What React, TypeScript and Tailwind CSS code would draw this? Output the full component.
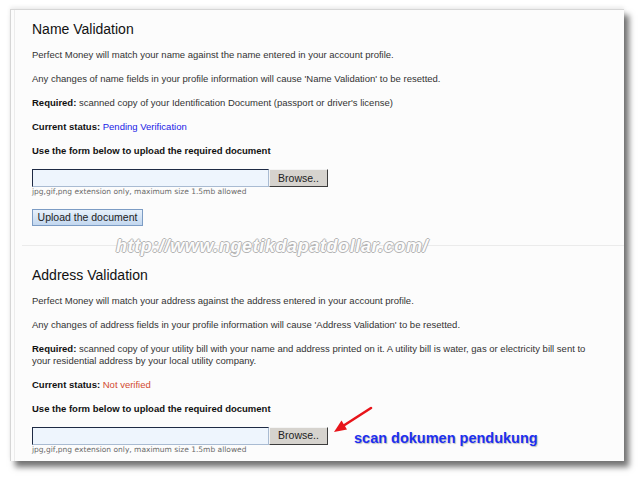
import React from 'react';

const body = "font-['Liberation_Sans',Arial,sans-serif]";

function FileRow() {
  return (
    <>
      <div className="flex">
        <div className="h-[18px] w-[237px] border border-t-[#1e2a44] border-l-[#1e2a44] border-r-[#a9bbd2] border-b-[#a9bbd2] bg-[#eef5fd]" />
        <button className="flex h-[18px] w-[59px] items-center justify-center border border-t-[#f4f4f4] border-l-[#f4f4f4] border-r-[#3c3c3c] border-b-[#3c3c3c] bg-[#d6d3ce] text-[10.5px] leading-none text-[#222]">
          Browse..
        </button>
      </div>
      <p className="font-['DejaVu_Sans',Verdana,sans-serif] text-[7.5px] leading-[9px] text-[#6a6a6a]">
        jpg,gif,png extension only, maximum size 1.5mb allowed
      </p>
    </>
  );
}

function Section({
  title,
  lines,
  required,
  status,
  statusClass,
}: {
  title: string;
  lines: string[];
  required: React.ReactNode;
  status: string;
  statusClass: string;
}) {
  return (
    <div>
      <h2 className="text-[14px] leading-[16px] text-[#111]">{title}</h2>
      {lines.map((l) => (
        <p key={l} className="mt-[12px] leading-[12px]">
          {l}
        </p>
      ))}
      <p className="mt-[12px] leading-[11.5px]">
        <b className="text-[#111]">Required:</b> {required}
      </p>
      <p className="mt-[12.5px] leading-[12px]">
        <b className="text-[#111]">Current status:</b> <span className={statusClass}>{status}</span>
      </p>
      <p className="mt-[12px] leading-[12px] font-bold text-[#111]">Use the form below to upload the required document</p>
      <div className="mt-[12px]">
        <FileRow />
      </div>
    </div>
  );
}

export default function App() {
  return (
    <div className={`relative h-[478px] w-[640px] overflow-hidden bg-white pl-[10px] pt-[9px] ${body}`}>
      <div className="h-[452px] w-[614px] overflow-hidden border-l border-t border-[#d6d6d6] bg-[#fcfcfc] shadow-[5px_6px_6px_rgba(0,0,0,0.55),0_-2px_4px_rgba(0,0,0,0.08)]">
        <div className="h-full ml-[3px] border-l border-[#ececec] pl-[17px] pt-[11px] text-[9.5px] text-[#333]">
          <Section
            title="Name Validation"
            lines={[
              'Perfect Money will match your name against the name entered in your account profile.',
              "Any changes of name fields in your profile information will cause 'Name Validation' to be resetted.",
            ]}
            required="scanned copy of your Identification Document (passport or driver's license)"
            status="Pending Verification"
            statusClass="text-[#1a1ae6]"
          />
          <button className="mt-[13px] h-[17px] w-[111px] border border-[#7c9cc4] bg-gradient-to-b from-[#e8f1fb] to-[#c2d7ef] text-[10.5px] leading-none text-[#222]">
            Upload the document
          </button>

          <div className="relative mt-[10px] h-[20px]">
            <div className="absolute left-[-10px] right-0 top-[9px] border-t border-[#ebebeb]" />
            <span className="absolute left-[84px] top-0 text-[18px] font-bold italic leading-[20px] tracking-[0.6px] text-[#fcfcfc] [text-shadow:1px_0_0_#b4b4b4,-1px_0_0_#b4b4b4,0_1px_0_#b4b4b4,0_-1px_0_#b4b4b4]">
              http://www.ngetikdapatdollar.com/
            </span>
          </div>

          <div className="mt-[11px]">
            <Section
              title="Address Validation"
              lines={[
                'Perfect Money will match your address against the address entered in your account profile.',
                "Any changes of address fields in your profile information will cause 'Address Validation' to be resetted.",
              ]}
              required={
                <>
                  scanned copy of your utility bill with your name and address printed on it. A utility bill is water, gas or electricity bill sent to
                  <br />
                  your residential address by your local utility company.
                </>
              }
              status="Not verified"
              statusClass="text-[#d24a30]"
            />
          </div>
        </div>
      </div>

      <svg className="pointer-events-none absolute left-0 top-0" width="640" height="478" viewBox="0 0 640 478">
        <line x1="371" y1="408" x2="343" y2="426" stroke="#e8141a" strokeWidth="2.6" strokeLinecap="round" />
        <polygon points="334,432 341.5,420.5 347,429.5" fill="#e8141a" />
      </svg>
      <span className="absolute left-[354px] top-[430px] text-[14.5px] font-bold leading-[16px] text-[#1c2ff0] [text-shadow:1px_1px_1px_rgba(0,0,0,0.25)]">
        scan dokumen pendukung
      </span>
    </div>
  );
}
